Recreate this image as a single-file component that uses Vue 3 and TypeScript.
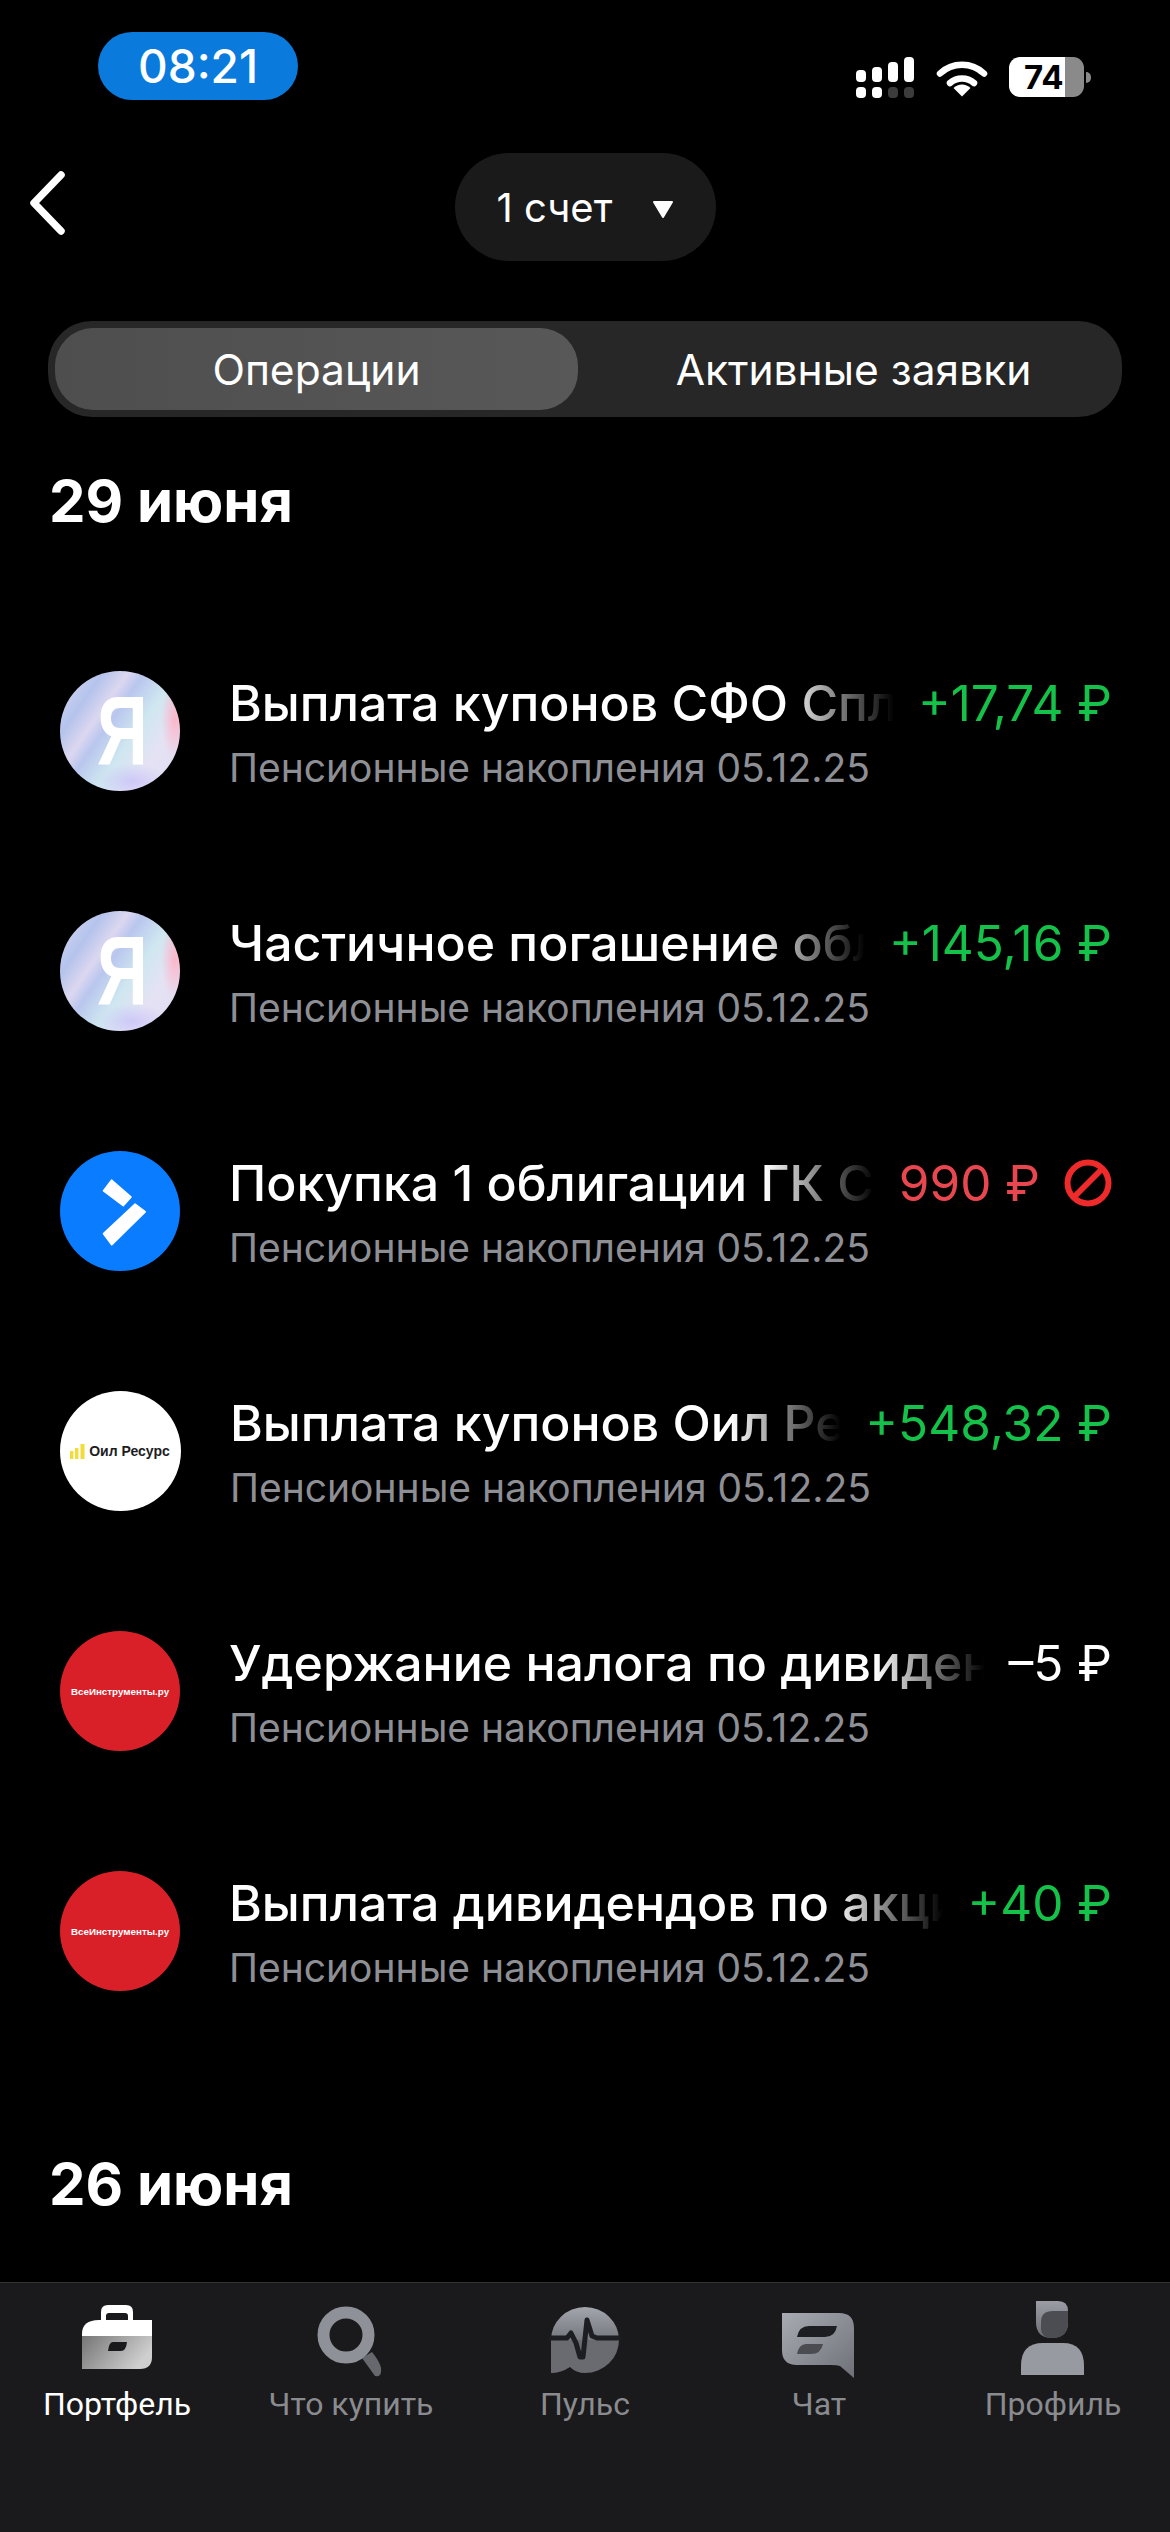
<template>
  <div class="page">
    <div class="status-bar">
      <div class="time-pill">08:21</div>
      <div class="status-icons">
        <svg class="signal" width="60" height="42" viewBox="0 0 60 42">
          <rect x="0" y="13" width="10" height="12" rx="4" fill="#fff" />
          <rect x="16" y="10" width="10" height="15" rx="4" fill="#fff" />
          <rect x="32" y="5" width="10" height="20" rx="4" fill="#fff" />
          <rect x="48" y="0" width="10" height="25" rx="4" fill="#fff" />
          <rect x="0" y="30" width="10" height="11" rx="4" fill="#fff" />
          <rect x="16" y="30" width="10" height="11" rx="4" fill="#fff" />
          <rect x="32" y="30" width="10" height="11" rx="4" fill="#3c3c3c" />
          <rect x="48" y="30" width="10" height="11" rx="4" fill="#3c3c3c" />
        </svg>
        <svg class="wifi" width="52" height="38" viewBox="0 0 52 38">
          <path d="M4 14.5a32 32 0 0 1 44 0" fill="none" stroke="#fff" stroke-width="6.5" stroke-linecap="round" />
          <path d="M14 24a18 18 0 0 1 24 0" fill="none" stroke="#fff" stroke-width="6.5" stroke-linecap="round" />
          <path d="M26 37.5l-8.5-8.5a12 12 0 0 1 17 0z" fill="#fff" />
        </svg>
        <div class="battery">
          <div class="battery-body"><span>74</span></div>
          <div class="battery-nub"></div>
        </div>
      </div>
    </div>

    <header class="top-bar">
      <svg class="back" width="40" height="64" viewBox="0 0 40 64">
        <path d="M33 4L6 32l27 28" fill="none" stroke="#fff" stroke-width="7.5" stroke-linecap="round" stroke-linejoin="round" />
      </svg>
      <div class="account-pill">
        <span>1 счет</span>
        <svg class="caret" width="22" height="20" viewBox="0 0 22 20"><path d="M2 3h18L11 18z" fill="#fff" stroke="#fff" stroke-width="2" stroke-linejoin="round" /></svg>
      </div>
    </header>

    <div class="segment">
      <div class="segment-item active">Операции</div>
      <div class="segment-item right">Активные заявки</div>
    </div>

    <h2 class="day first">29 июня</h2>

    <ul class="ops">
      <li v-for="op in operations" :key="op.title" class="op">
        <div v-if="op.logo === 'ya'" class="avatar ya"><span>Я</span></div>
        <div v-else-if="op.logo === 'blue'" class="avatar blue">
          <svg width="120" height="120" viewBox="0 0 120 120">
            <path d="M51.7 29.4L70.7 46.1 63.3 54.4 43.7 39.8z" fill="#fff" stroke="#fff" stroke-width="2" stroke-linejoin="round" />
            <path d="M75 53.4L85 60.8 51.7 93.5 43.7 82.7z" fill="#fff" stroke="#fff" stroke-width="2" stroke-linejoin="round" />
          </svg>
        </div>
        <div v-else-if="op.logo === 'oil'" class="avatar oil">
          <svg width="16" height="15" viewBox="0 0 16 15">
            <rect x="0" y="7" width="3.4" height="8" fill="#f1dc3a" />
            <rect x="5" y="4" width="3.4" height="11" fill="#f1dc3a" />
            <rect x="10.5" y="0" width="4" height="15" fill="#f1dc3a" />
          </svg>
          <span>Оил Ресурс</span>
        </div>
        <div v-else class="avatar vi">ВсеИнструменты.ру</div>

        <div class="op-body">
          <div class="op-line">
            <div class="op-title">{{ op.title }}</div>
            <div class="op-amount" :class="op.kind">{{ op.amount }}</div>
            <svg v-if="op.kind === 'rejected'" class="ban" width="48" height="48" viewBox="0 0 48 48">
              <circle cx="24" cy="24" r="20.5" fill="none" stroke="#ee2a2a" stroke-width="6" />
              <path d="M10 38L38 10" stroke="#ee2a2a" stroke-width="6" />
            </svg>
          </div>
          <div class="op-sub">Пенсионные накопления 05.12.25</div>
        </div>
      </li>
    </ul>

    <h2 class="day second">26 июня</h2>

    <nav class="tabs">
      <div class="tab current">
        <svg width="80" height="80" viewBox="0 0 80 80">
          <defs>
            <linearGradient id="case" x1="0" y1="0" x2="1" y2="0.4">
              <stop offset="0" stop-color="#757575" />
              <stop offset="1" stop-color="#cfcfcf" />
            </linearGradient>
          </defs>
          <path d="M24 20v-8q0-7 7-7h18q7 0 7 7v8h-5v-4q0-3-3-3H32q-3 0-3 3v4z" fill="#fff" />
          <path d="M5 36V34Q5 20 22 20H75V36z" fill="#fff" />
          <path d="M5 36H75V57Q75 69 63 69H5z" fill="url(#case)" />
          <path d="M36 42H50Q49 51 44 51H31Q32 42 36 42z" fill="#1a1a1c" />
        </svg>
        <span>Портфель</span>
      </div>
      <div class="tab">
        <svg width="80" height="80" viewBox="0 0 80 80">
          <path d="M51 58L64 76Q71 78 70 68 69 62 61 52z" fill="#66686d" />
          <circle cx="35" cy="35" r="22.5" fill="none" stroke="#8e9198" stroke-width="12" />
        </svg>
        <span>Что купить</span>
      </div>
      <div class="tab">
        <svg width="80" height="80" viewBox="0 0 80 80">
          <defs>
            <linearGradient id="pulse" x1="0" y1="0" x2="0" y2="1">
              <stop offset="0" stop-color="#a3a6ac" />
              <stop offset="1" stop-color="#74777d" />
            </linearGradient>
          </defs>
          <path d="M6 40A34 33 0 0 1 74 40z" fill="url(#pulse)" />
          <path d="M6 40H74A34 33 0 0 1 40 73Q31 73 25 67 16 73 6 73z" fill="#696b70" />
          <path d="M4 38H22L26 33 31 43 35 57H38L42 20 47 36 52 38H76" fill="none" stroke="#1c1e22" stroke-width="5" stroke-linejoin="round" />
        </svg>
        <span>Пульс</span>
      </div>
      <div class="tab">
        <svg width="80" height="80" viewBox="0 0 80 80">
          <defs>
            <linearGradient id="chat" x1="0" y1="0" x2="1" y2="1">
              <stop offset="0" stop-color="#a8abb2" />
              <stop offset="1" stop-color="#6d7076" />
            </linearGradient>
          </defs>
          <path d="M3 13H60Q75 13 75 28V78L61 66Q58 65 52 65H18Q3 65 3 50z" fill="url(#chat)" />
          <path d="M30 26H58Q56 37 46 37H18Q20 26 30 26z" fill="#1c1e22" />
          <path d="M27 44H44Q42 54 32 54H18Q20 44 27 44z" fill="#4a4c52" />
        </svg>
        <span>Чат</span>
      </div>
      <div class="tab">
        <svg width="80" height="80" viewBox="0 0 80 80">
          <defs>
            <linearGradient id="head" x1="0" y1="0" x2="0" y2="1">
              <stop offset="0" stop-color="#9a9da3" />
              <stop offset="1" stop-color="#6c6e74" />
            </linearGradient>
          </defs>
          <path d="M23 1H45Q55 1 55 11V22Q55 38 39 38 23 38 23 22z" fill="url(#head)" />
          <path d="M55 11V22Q55 38 39 38 28 38 28 28V22Q28 11 40 11z" fill="#4b4d52" />
          <path d="M8 75V66Q8 43 30 43H50Q71 43 71 66V75z" fill="#979aa0" />
        </svg>
        <span>Профиль</span>
      </div>
    </nav>
  </div>
</template>

<script setup lang="ts">
interface Operation {
  title: string
  amount: string
  kind: 'income' | 'rejected' | 'plain'
  logo: 'ya' | 'blue' | 'oil' | 'vi'
}

const operations: Operation[] = [
  { title: 'Выплата купонов СФО Сплит', amount: '+17,74 ₽', kind: 'income', logo: 'ya' },
  { title: 'Частичное погашение облигации', amount: '+145,16 ₽', kind: 'income', logo: 'ya' },
  { title: 'Покупка 1 облигации ГК Самолёт', amount: '990 ₽', kind: 'rejected', logo: 'blue' },
  { title: 'Выплата купонов Оил Ресурс', amount: '+548,32 ₽', kind: 'income', logo: 'oil' },
  { title: 'Удержание налога по дивидендам', amount: '–5 ₽', kind: 'plain', logo: 'vi' },
  { title: 'Выплата дивидендов по акциям', amount: '+40 ₽', kind: 'income', logo: 'vi' }
]
</script>

<style>
html,
body {
  margin: 0;
  background: #000;
}
</style>

<style scoped>
.page {
  width: 1170px;
  height: 2532px;
  overflow: hidden;
  display: flex;
  flex-direction: column;
  background: #000;
  color: #fff;
  font-family: Inter, "Liberation Sans", sans-serif;
}

.status-bar {
  height: 100px;
  padding: 32px 79px 0 98px;
  box-sizing: border-box;
  display: flex;
  justify-content: space-between;
  align-items: flex-start;
}

.time-pill {
  width: 200px;
  height: 68px;
  border-radius: 34px;
  background: #0a7bdd;
  display: flex;
  align-items: center;
  justify-content: center;
  font-size: 46px;
  font-weight: 500;
}

.status-icons {
  display: flex;
  align-items: flex-start;
  margin-top: 25px;
}

.wifi {
  margin: 2px 0 0 20px;
}

.battery {
  display: flex;
  align-items: center;
  margin-left: 21px;
}

.battery-body {
  width: 75px;
  height: 40px;
  border-radius: 11px;
  background: linear-gradient(90deg, #fff 75%, #8a8a8a 75%);
  color: #000;
  font-size: 33px;
  font-weight: 700;
  line-height: 40px;
  box-sizing: border-box;
  padding-left: 15px;
}

.battery-nub {
  width: 5px;
  height: 11px;
  margin-left: 2px;
  border-radius: 0 6px 6px 0;
  background: #8a8a8a;
}

.top-bar {
  position: relative;
  height: 108px;
  margin-top: 53px;
  display: flex;
  justify-content: center;
}

.back {
  position: absolute;
  left: 28px;
  top: 18px;
}

.account-pill {
  width: 261px;
  height: 108px;
  border-radius: 54px;
  background: #1a1a1a;
  display: flex;
  align-items: center;
  box-sizing: border-box;
  padding-left: 42px;
  gap: 40px;
  font-size: 40px;
  font-weight: 400;
}

.caret {
  margin-top: 4px;
}

.segment {
  width: 1074px;
  height: 96px;
  margin: 60px 0 0 48px;
  padding: 7px;
  box-sizing: border-box;
  border-radius: 44px;
  background: #272727;
  display: grid;
  grid-template-columns: 523px 1fr;
}

.segment-item {
  display: flex;
  align-items: center;
  justify-content: center;
  font-size: 42.5px;
}

.segment-item.right {
  padding-left: 14px;
}

.segment-item.active {
  border-radius: 38px;
  background: linear-gradient(90deg, #4e4e4e, #585858);
}

.day {
  margin: 0 0 0 49px;
  font-size: 58px;
  line-height: 68px;
  font-weight: 700;
}

.day.first {
  margin-top: 50px;
}

.day.second {
  margin-top: 99px;
}

.ops {
  list-style: none;
  margin: 76px 0 0;
  padding: 0;
}

.op {
  height: 240px;
  box-sizing: border-box;
  padding: 0 58px 0 60px;
  display: flex;
  align-items: center;
}

.avatar {
  flex: none;
  width: 120px;
  height: 120px;
  border-radius: 50%;
  overflow: hidden;
  display: flex;
  align-items: center;
  justify-content: center;
}

.ya {
  background:
    radial-gradient(ellipse 14px 40px at 96% 40%, rgba(255, 176, 196, 0.9), transparent),
    radial-gradient(ellipse 36px 18px at 60% 92%, rgba(196, 190, 250, 0.7), transparent),
    linear-gradient(125deg, #d9dcf2 0%, #b5c3ec 22%, #dcd7f0 34%, #b9c6ee 42%, #cfe7f0 58%, #e5e2f4 75%, #dfdcf2 100%);
  color: #fff;
  font-family: "Liberation Sans", sans-serif;
  font-size: 98px;
  font-weight: 700;
  line-height: 1;
}

.ya span {
  display: block;
  transform: scaleX(0.72) translateX(3px);
}

.blue {
  background: #0a7cff;
}

.oil {
  background: #fff;
  gap: 3px;
  padding-right: 1px;
  color: #1d1d1f;
  font-family: "Liberation Sans", sans-serif;
  font-size: 14px;
  font-weight: 700;
  white-space: nowrap;
}

.vi {
  background: #d92029;
  color: #fff;
  font-family: "Liberation Sans", sans-serif;
  font-size: 9.8px;
  font-weight: 700;
  white-space: nowrap;
}

.op-body {
  flex: 1;
  min-width: 0;
  margin-left: 49px;
  padding-top: 3px;
}

.op-line {
  display: flex;
  align-items: center;
  gap: 24px;
  margin-top: -2px;
}

.op-title {
  flex: 1;
  min-width: 0;
  overflow: hidden;
  white-space: nowrap;
  font-size: 50px;
  line-height: 62px;
  font-weight: 500;
  -webkit-mask-image: linear-gradient(90deg, #000 calc(100% - 110px), transparent);
  mask-image: linear-gradient(90deg, #000 calc(100% - 110px), transparent);
}

.op-amount {
  flex: none;
  font-size: 49.5px;
  line-height: 62px;
}

.income {
  color: #14c24a;
}

.rejected {
  color: #e9474f;
}

.plain {
  color: #fff;
}

.ban {
  flex: none;
}

.op-sub {
  margin-top: 11px;
  font-size: 39px;
  line-height: 46px;
  color: #8e8f94;
  white-space: nowrap;
}

.tabs {
  margin-top: auto;
  height: 250px;
  box-sizing: border-box;
  padding-top: 17px;
  border-top: 1px solid #333;
  background: #1a1a1c;
  display: grid;
  grid-template-columns: repeat(5, 234px);
}

.tab {
  display: flex;
  flex-direction: column;
  align-items: center;
  color: #8a8b8f;
  font-family: Roboto, sans-serif;
  font-size: 32px;
  line-height: 40px;
}

.tab span {
  margin-top: 4px;
}

.tab.current {
  color: #fff;
}
</style>
